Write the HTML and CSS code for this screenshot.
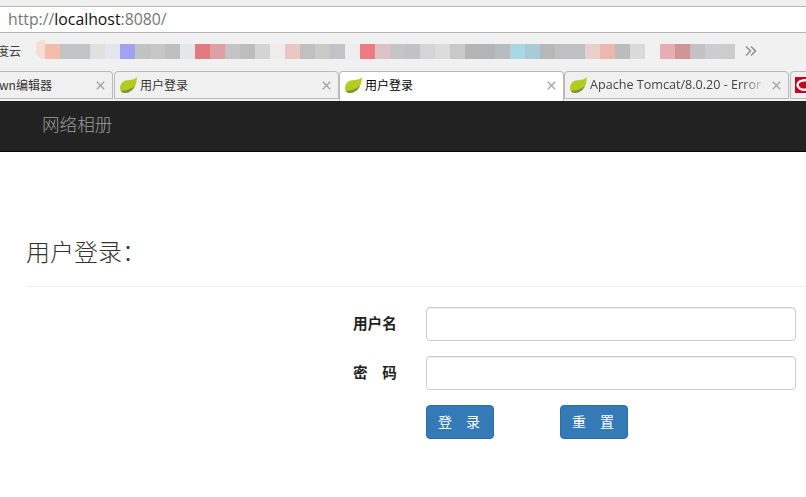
FILE: index.html
```html
<!DOCTYPE html>
<html lang="zh-CN">
<head>
<meta charset="utf-8">
<title>用户登录</title>
<link rel="stylesheet" href="styles.css">
</head>
<body>
<svg class="defs" width="0" height="0" aria-hidden="true">
  <symbol id="leaf" viewBox="0 0 17 16">
    <path d="M16.800 0C16.800 3.500 16.400 6.500 15 9C13 13 9.500 16 5 16C2 16 0 14.300 0 11.300C0 6.800 3 3.800 7 3.300C11 2.800 14.500 3 16.800 0Z" fill="#b5cc1e"/>
    <path d="M.8 13.800C6 13.800 11 12 15 9C13 13 9.500 16 5 16C3.100 16 1.700 15.200 .8 13.800Z" fill="#7d9440"/>
  </symbol>
  <symbol id="x" viewBox="0 0 9 9">
    <path d="M.8 .8L8.200 8.200M8.200 .8L.8 8.200" fill="none" stroke="#a2a2a2" stroke-width="1.300"/>
  </symbol>
</svg>
<div class="browser">
  <div class="topstrip"></div>
  <div class="address"><span class="dim">http://</span>localhost<span class="dim">:8080/</span></div>
  <div class="bookmarks">
    <span class="bm-label">度云</span>
    <div class="blur">
      <span class="blob"></span>
      <i class="p c01"></i><i class="p c02"></i><i class="p c02"></i><i class="p c03"></i><i class="p c04"></i>
      <i class="p c05"></i><i class="p c06"></i><i class="p c07"></i><i class="p c08"></i><i class="p c09"></i>
      <i class="p c10"></i><i class="p c11"></i><i class="p c12"></i><i class="p c13"></i><i class="p c14"></i>
      <i class="p c15"></i><i class="p c16"></i><i class="p c17"></i><i class="p c18"></i><i class="p c19"></i>
      <i class="p c20"></i><i class="p c21"></i><i class="p c22"></i><i class="p c23"></i><i class="p c24"></i>
      <i class="p c25"></i><i class="p c26"></i><i class="p c27"></i><i class="p c28"></i><i class="p c29"></i>
      <i class="p c30"></i><i class="p c31"></i><i class="p c32"></i><i class="p c33"></i><i class="p c34"></i>
      <i class="p c35"></i><i class="p c36"></i><i class="p c37"></i><i class="p c38"></i><i class="p c39"></i>
      <i class="p c40"></i><i class="p c41"></i><i class="p c42"></i><i class="p c43"></i><i class="p c44"></i>
      <i class="p c45"></i>
    </div>
    <svg class="more" width="12" height="12" viewBox="0 0 12 12"><path d="M1 1.500L5.500 6L1 10.500M6 1.500L10.500 6L6 10.500" fill="none" stroke="#8e8e8e" stroke-width="1.500"/></svg>
  </div>
  <div class="tabs">
    <div class="tab tab-first"><span class="tab-title">wn编辑器</span><svg class="close"><use href="#x"/></svg></div>
    <div class="tab"><svg class="favicon"><use href="#leaf"/></svg><span class="tab-title">用户登录</span><svg class="close"><use href="#x"/></svg></div>
    <div class="tab active"><svg class="favicon"><use href="#leaf"/></svg><span class="tab-title">用户登录</span><svg class="close"><use href="#x"/></svg></div>
    <div class="tab"><svg class="favicon"><use href="#leaf"/></svg><span class="tab-title fade">Apache Tomcat/8.0.20 - Error</span><svg class="close"><use href="#x"/></svg></div>
    <div class="tab tab-last"><svg class="red-icon" width="16" height="16" viewBox="0 0 16 16"><rect width="16" height="16" fill="#c8001e"/><ellipse cx="10" cy="8" rx="7.500" ry="4.800" fill="none" stroke="#fff" stroke-width="2.400"/></svg></div>
  </div>
</div>
<nav class="navbar"><span class="brand">网络相册</span></nav>
<main class="content">
  <h3 class="title">用户登录：</h3>
  <form class="login">
    <div class="row">
      <label class="label" for="u">用户名</label>
      <input class="field" id="u" type="text">
    </div>
    <div class="row">
      <label class="label" for="p">密　码</label>
      <input class="field" id="p" type="password">
    </div>
    <div class="actions">
      <button class="btn" type="button">登　录</button>
      <button class="btn" type="button">重　置</button>
    </div>
  </form>
</main>
</body>
</html>
```
FILE: styles.css
```css
* { box-sizing: border-box; }
html, body { margin: 0; padding: 0; }
body {
  width: 806px;
  height: 497px;
  overflow: hidden;
  background: #fff;
  font-family: "Liberation Sans", "Noto Sans CJK SC", sans-serif;
  color: #333;
}
.defs { display: block; height: 0; }
.browser { background: #f1f1f1; }
.topstrip { height: 6px; background: #f0f0f0; }
.address {
  height: 27px;
  background: #fff;
  border-top: 1px solid #b6b6b6;
  border-bottom: 1px solid #b6b6b6;
  padding-left: 8px;
  font: 15.800px/24px "Open Sans", "Noto Sans CJK SC", sans-serif;
  color: #111;
  white-space: nowrap;
}
.dim { color: #777; }
.bookmarks {
  height: 38px;
  display: flex;
  align-items: center;
  padding-bottom: 2px;
  overflow: hidden;
}
.bm-label {
  width: 36px;
  margin-left: -3px;
  margin-right: 3px;
  flex: none;
  font: 12px/16px "Noto Sans CJK SC", sans-serif;
  color: #444;
}
.blur { display: flex; align-items: center; height: 15px; }
.blob {
  width: 9px;
  height: 19px;
  margin-top: -4px;
  background: #f8ddd3;
  border-radius: 6px 0 0 8px;
}
.p { display: block; width: 15px; height: 15px; }
.c01 { background: #f4bdaa; } .c02 { background: #c2c3c4; } .c03 { background: #e0e0e1; }
.c04 { background: #e5e5f0; } .c05 { background: #a0a3f0; } .c06 { background: #c2c2c2; }
.c07 { background: #c6c6c6; } .c08 { background: #bfbfbf; } .c09 { background: #e3e7ea; }
.c10 { background: #e27a80; } .c11 { background: #dda0a5; } .c12 { background: #c4c4c6; }
.c13 { background: #bdbdbd; } .c14 { background: #d4d4d5; } .c15 { background: #f0ecec; }
.c16 { background: #eac6c4; } .c17 { background: #c0c0c0; } .c18 { background: #c9cac8; }
.c19 { background: #c3c3c7; } .c20 { background: #eeeeee; } .c21 { background: #ee7a82; }
.c22 { background: #dcc3c6; } .c23 { background: #c4c5c4; } .c24 { background: #c2c2c6; }
.c25 { background: #d5d5d6; } .c26 { background: #dcdcdc; } .c27 { background: #c9c9c9; }
.c28 { background: #b3b4b3; } .c29 { background: #b2b5b6; } .c30 { background: #b8bcbf; }
.c31 { background: #a8d8e8; } .c32 { background: #a8ccd6; } .c33 { background: #b8b8b8; }
.c34 { background: #c0c0c0; } .c35 { background: #bec0c4; } .c36 { background: #e8d0cc; }
.c37 { background: #ecb8ae; } .c38 { background: #bcbcbe; } .c39 { background: #d9dad9; }
.c40 { background: #f0f1f0; } .c41 { background: #e4aeb2; } .c42 { background: #cf9598; }
.c43 { background: #c2c2c4; } .c44 { background: #cdcdcf; } .c45 { background: #cccccd; }
.more { margin-left: 10px; flex: none; }
.tabs {
  height: 30px;
  display: flex;
  overflow: hidden;
}
.tab {
  flex: none;
  width: 225px;
  height: 28px;
  display: flex;
  align-items: center;
  padding: 0 7px 0 5px;
  background: #f0f0f0;
  border: 1px solid #b9b9b9;
  border-radius: 4px 4px 0 0;
  font: 12px/16px "Noto Sans CJK SC", sans-serif;
  color: #333;
  white-space: nowrap;
}
.tab-first {
  width: 113px;
  margin-right: 1px;
  padding-left: 0;
  border-left: 0;
  border-top-left-radius: 0;
  text-indent: -1px;
}
.tab-last { width: 30px; margin-left: 1px; padding: 0 0 0 4px; border-right: 0; }
.red-icon { flex: none; }
.active {
  height: 30px;
  padding-bottom: 3px;
  background: #fff;
  color: #000;
  border-bottom: 0;
}
.favicon { width: 17px; height: 16px; margin-right: 3px; flex: none; }
.tab-title { flex: 1; overflow: hidden; min-width: 0; }
.fade {
  font-family: "Open Sans", "Noto Sans CJK SC", sans-serif;
  font-size: 12.600px;
  color: #444;
  -webkit-mask-image: linear-gradient(to right, #000 85%, transparent 100%);
  mask-image: linear-gradient(to right, #000 85%, transparent 100%);
}
.close { flex: none; width: 9px; height: 9px; margin-left: 4px; }
.navbar {
  height: 51px;
  background: #222;
  border-bottom: 1px solid #080808;
  padding: 0 0 4px 42px;
  display: flex;
  align-items: center;
}
.brand {
  font: 300 17.600px/20px "Noto Sans CJK SC", sans-serif;
  color: #9d9d9d;
}
.content { padding: 0 10px 0 26px; }
.title {
  margin: 84px -10px 0 0;
  padding: 0;
  height: 51px;
  border-bottom: 1px solid #eee;
  font: 300 24px/29px "Noto Sans CJK SC", sans-serif;
  color: #333;
}
.login { padding-top: 20px; }
.row {
  display: flex;
  align-items: center;
  height: 34px;
  margin-bottom: 15px;
  padding-left: 327px;
}
.label {
  width: 73px;
  flex: none;
  padding-bottom: 2px;
  font: 700 14.600px/20px "Noto Sans CJK SC", sans-serif;
  color: #222;
  white-space: nowrap;
}
.field {
  flex: 1;
  min-width: 0;
  height: 34px;
  border: 1px solid #ccc;
  border-radius: 4px;
  background: #fff;
  box-shadow: inset 0 1px 1px rgba(0, 0, 0, .075);
  outline: 0;
}
.actions {
  display: flex;
  gap: 66px;
  padding-left: 400px;
}
.btn {
  width: 68px;
  height: 34px;
  padding: 0 2px 2px 0;
  border: 1px solid #2e6da4;
  border-radius: 4px;
  background: #337ab7;
  color: #fff;
  font: 14px/20px "Noto Sans CJK SC", sans-serif;
}
```
